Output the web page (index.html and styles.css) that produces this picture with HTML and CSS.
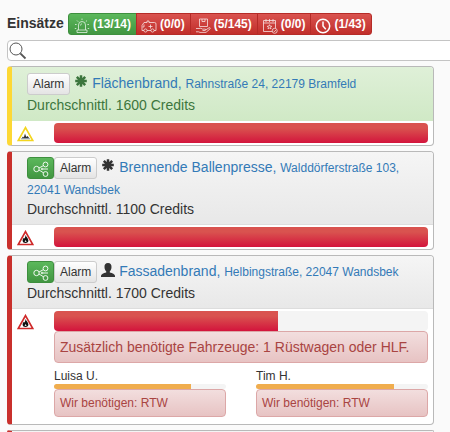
FILE: index.html
```html
<!DOCTYPE html>
<html lang="de">
<head>
<meta charset="utf-8">
<title>Einsätze</title>
<link rel="stylesheet" href="styles.css">
</head>
<body>
<svg class="defs" aria-hidden="true">
  <symbol id="share" viewBox="0 0 16 16"><g fill="none" stroke="currentColor" stroke-width=".9"><circle cx="3.500" cy="8" r="2.700"/><circle cx="12.500" cy="3.500" r="2.400"/><circle cx="12.500" cy="13" r="2.400"/><circle cx="9" cy="8" r=".8"/><path d="M6 7l4.300-2.300M6 9l4.300 2.700M10 8h5"/></g></symbol>
  <symbol id="asterisk" viewBox="0 0 12 12"><path d="M6 .2v11.600M.2 6h11.600M1.800 1.800l8.400 8.400M10.200 1.800l-8.400 8.400" stroke="currentColor" stroke-width="2.500"/></symbol>
  <symbol id="user" viewBox="0 0 14 14"><path fill="currentColor" d="M7 0c2.600 0 3.700 1.700 3.500 4.200C10.400 6.300 9.600 7.600 8.800 8.300v1.200c2.500.8 5.200 1.600 5.200 3.300V14H0v-1.200c0-1.700 2.700-2.500 5.200-3.300V8.300C4.400 7.600 3.600 6.300 3.500 4.200 3.300 1.700 4.400 0 7 0z"/></symbol>
  <symbol id="fire" viewBox="0 0 17 16"><path d="M8.500 1.600L15.800 14.500H1.200z" fill="#fff" stroke="#cf2a2a" stroke-width="1.700"/><path d="M8.600 5c.2 1.600 2.800 3.500 2.800 5.600 0 1.500-1 2.400-2.800 2.400s-3-.8-3-2.500c0-1.200.7-1.800 1.100-2.800l.8.900c.6-1 .9-2.100 1.100-3.600z" fill="#111"/><path d="M8.600 9.800l1 2.200h-2z" fill="#ddd"/></symbol>
</svg>

<header class="top">
  <h1>Einsätze</h1>
  <nav class="group">
    <a class="tab on"><svg width="16" height="16" viewBox="0 0 16 16"><path d="M4.500 12V7a3.500 3.500 0 0 1 7 0v5M3 12h10v2.500H3zM6.500 7.500c0-1 .5-1.600 1.500-1.600M8 .5v1.500M3 2.500l1.200 1.200M13 2.500l-1.200 1.200M1 6.500h1.600M13.400 6.500H15M.8 10.500h1.500M13.700 10.500h1.500"/></svg><span>(13/14)</span></a>
    <a class="tab"><svg width="16" height="16" viewBox="0 0 16 16"><path d="M3 12.500H1V7.500l2-3h3V3h2v1.500h5.500q1.500 0 1.500 1.500v6.500h-2M6 12.500h4M3 6.500v2.500H1.500M9.500 6.500v4M7.500 8.500h4"/><circle cx="4.500" cy="12.500" r="1.600"/><circle cx="11.500" cy="12.500" r="1.600"/></svg><span>(0/0)</span></a>
    <a class="tab"><svg width="16" height="16" viewBox="0 0 16 16"><path d="M4.500 1h8v7.500h-8zM7 1v2.500h3V1M1 10.500h3q2-.8 3.500.6h3q.8 1-.5 1.400H7.500M10.500 12l4-2.500q1.200.2.500 1.400l-4 3.500H5L3.500 13.800H1"/></svg><span>(5/145)</span></a>
    <a class="tab"><svg width="16" height="16" viewBox="0 0 16 16"><path d="M10 13.500H1.500v-11h12V10M1.500 5h12M4 1v3M7.500 1v3M11 1v3M7.500 6.700l.7 1.500 1.600.1-1.200 1 .4 1.600-1.500-.9-1.500.9.4-1.600-1.200-1 1.600-.1z"/><circle cx="12.700" cy="12.800" r="2.500"/><path d="M11.600 12.800l.8.900 1.500-1.700"/></svg><span>(0/0)</span></a>
    <a class="tab clock"><svg width="16" height="16" viewBox="0 0 16 16"><circle cx="8" cy="8" r="6.700"/><path d="M8 3.500V8l2.800 3.300"/></svg><span>(1/43)</span></a>
  </nav>
</header>

<div class="search"><svg width="18" height="18" viewBox="0 0 18 18"><circle cx="7" cy="7" r="6"/><path d="M11.300 11.300L16.500 16.500" class="handle"/></svg></div>

<main>
  <section class="card yellow">
    <div class="head green">
      <span class="btn">Alarm</span> <svg class="glyph star" width="12" height="12"><use href="#asterisk"/></svg> <a class="name">Flächenbrand, <small>Rahnstraße 24, 22179 Bramfeld</small></a>
      <div>Durchschnittl. 1600 Credits</div>
    </div>
    <div class="body">
      <svg class="sign" width="17" height="16" viewBox="0 0 17 16"><path d="M8.500 1.600L15.800 14.500H1.200z" fill="#fff" stroke="#f3d51f" stroke-width="1.700"/><path d="M4.500 12.500l1.500-2 .8 1L8 7.500l1.300 3.400 1.200-.8 2 2.400z" fill="#333"/><path d="M4 12.800h9" stroke="#8a9bb5"/></svg>
      <div class="detail"><div class="bar"><div class="fill" style="width:100%"></div></div></div>
    </div>
  </section>

  <section class="card">
    <div class="head">
      <span class="btn share"><svg width="16" height="16"><use href="#share"/></svg></span><span class="btn">Alarm</span> <svg class="glyph star" width="12" height="12"><use href="#asterisk"/></svg> <a class="name">Brennende Ballenpresse, <small>Walddörferstraße 103, 22041 Wandsbek</small></a>
      <div>Durchschnittl. 1100 Credits</div>
    </div>
    <div class="body">
      <svg class="sign" width="17" height="16"><use href="#fire"/></svg>
      <div class="detail"><div class="bar"><div class="fill" style="width:100%"></div></div></div>
    </div>
  </section>

  <section class="card">
    <div class="head">
      <span class="btn share"><svg width="16" height="16"><use href="#share"/></svg></span><span class="btn">Alarm</span> <svg class="glyph person" width="14" height="14"><use href="#user"/></svg> <a class="name">Fassadenbrand, <small>Helbingstraße, 22047 Wandsbek</small></a>
      <div>Durchschnittl. 1700 Credits</div>
    </div>
    <div class="body">
      <svg class="sign" width="17" height="16"><use href="#fire"/></svg>
      <div class="detail">
        <div class="bar"><div class="fill" style="width:59.9%"></div></div>
        <div class="alert">Zusätzlich benötigte Fahrzeuge: 1 Rüstwagen oder HLF.</div>
        <div class="people">
          <div><p>Luisa U.</p><div class="mini"><div class="amber" style="width:79.9%"></div></div><div class="alert small">Wir benötigen: RTW</div></div>
          <div><p>Tim H.</p><div class="mini"><div class="amber" style="width:80.2%"></div></div><div class="alert small">Wir benötigen: RTW</div></div>
        </div>
      </div>
    </div>
  </section>

  <section class="card"><div class="head"></div></section>
</main>
</body>
</html>
```
FILE: styles.css
```css
* { box-sizing: border-box; }
html { height: 100%; overflow: hidden; }
body {
  margin: 0;
  padding: 13px 0 0 7px;
  height: 432px;
  overflow: hidden;
  background: #fafafa;
  color: #333;
  font: 14px/20px "Liberation Sans", Arial, sans-serif;
}
.defs { display: none; }
.top { display: flex; height: 22px; }
h1 { margin: 0; width: 61px; font-size: 14px; line-height: 20px; white-space: nowrap; }
.group { display: flex; }
.tab {
  display: flex;
  align-items: center;
  gap: 3px;
  height: 22px;
  padding: 0 5px 0 4px;
  margin-left: -1px;
  border: 1px solid #b52b27;
  background: linear-gradient(#d9534f, #c12e2a);
  color: #fff;
  font-weight: bold;
  font-size: 12px;
  line-height: 18px;
}
.tab svg { margin-top: 3px; fill: none; stroke: #fff; stroke-width: .8; opacity: .85; }
.tab.clock svg { stroke-width: 1.5; opacity: 1; }
.tab.on { margin-left: 0; padding-left: 5px; border-color: #3e8f3e; background: linear-gradient(#5cb85c, #419641); border-radius: 3px 0 0 3px; }
.tab:last-child { border-radius: 0 3px 3px 0; }
.search {
  height: 21px;
  margin: 5px -4px 5px 0;
  padding: 1px 1px;
  border: 1px solid #c4c4c4;
  border-radius: 4px;
  background: #fff;
}
.search svg { display: block; fill: none; stroke: #555; stroke-width: 1; }
.search .handle { stroke-width: 1.8; }
.card {
  width: 427px;
  margin-bottom: 5px;
  border: 1px solid #b9b9b9;
  border-left: 5px solid #c9302c;
  border-radius: 4px;
  background: #fff;
  overflow: hidden;
}
.card.yellow { border-left-color: #fdd835; }
.head {
  padding: 5px 15px 5px;
  border-bottom: 1px solid #ddd;
  background: linear-gradient(#f5f5f5, #e8e8e8);
  line-height: 20px;
}
.head.green { padding-top: 6px; border-color: #d0e9c6; background: linear-gradient(#dff0d8, #d0e9c6); color: #3c763d; }
.card:last-child { margin-bottom: 0; height: 2px; border-bottom: 0; border-radius: 4px 4px 0 0; }
.btn {
  display: inline-block;
  height: 22px;
  padding: 1px 5px;
  border: 1px solid #ccc;
  border-radius: 3px;
  background: linear-gradient(#fff, #e4e4e4);
  color: #333;
  font-size: 12px;
  line-height: 18px;
  vertical-align: top;
}
.btn.share { width: 27px; border-color: #3e8f3e; background: linear-gradient(#5cb85c, #419641); color: #fff; }
.btn svg { display: block; margin-top: 2px; }
.glyph { vertical-align: top; }
.star { margin: 2px 1px 0; }
.person { margin-top: 2px; }
.name { color: #337ab7; }
small { font-size: 12px; line-height: 1; }
.body { display: flex; padding: 2px 5px 2px 4px; }
.sign { flex: none; margin: 3px 20px 0 1px; }
.detail { flex: 1; }
.bar { height: 20px; border-radius: 4px; background: #f4f4f4; overflow: hidden; }
.fill { height: 100%; background: linear-gradient(#d9534f 25%, #d3143c); }
.alert {
  height: 32px;
  padding: 5px;
  border: 1px solid #dca7a7;
  border-radius: 4px;
  background: linear-gradient(#f2dede, #e7c3c3);
  color: #a94442;
}
.people { display: grid; grid-template-columns: 172px 172px; gap: 30px; font-size: 12px; padding-bottom: 5px; }
.people p { margin: 3px 0 0; height: 18px; line-height: 20px; }
.mini { height: 5px; background: #f4f4f4; border-radius: 3px; overflow: hidden; }
.amber { height: 100%; background: #f0ad4e; }
.alert.small { height: 28px; padding: 4px 5px; line-height: 18px; }
```
